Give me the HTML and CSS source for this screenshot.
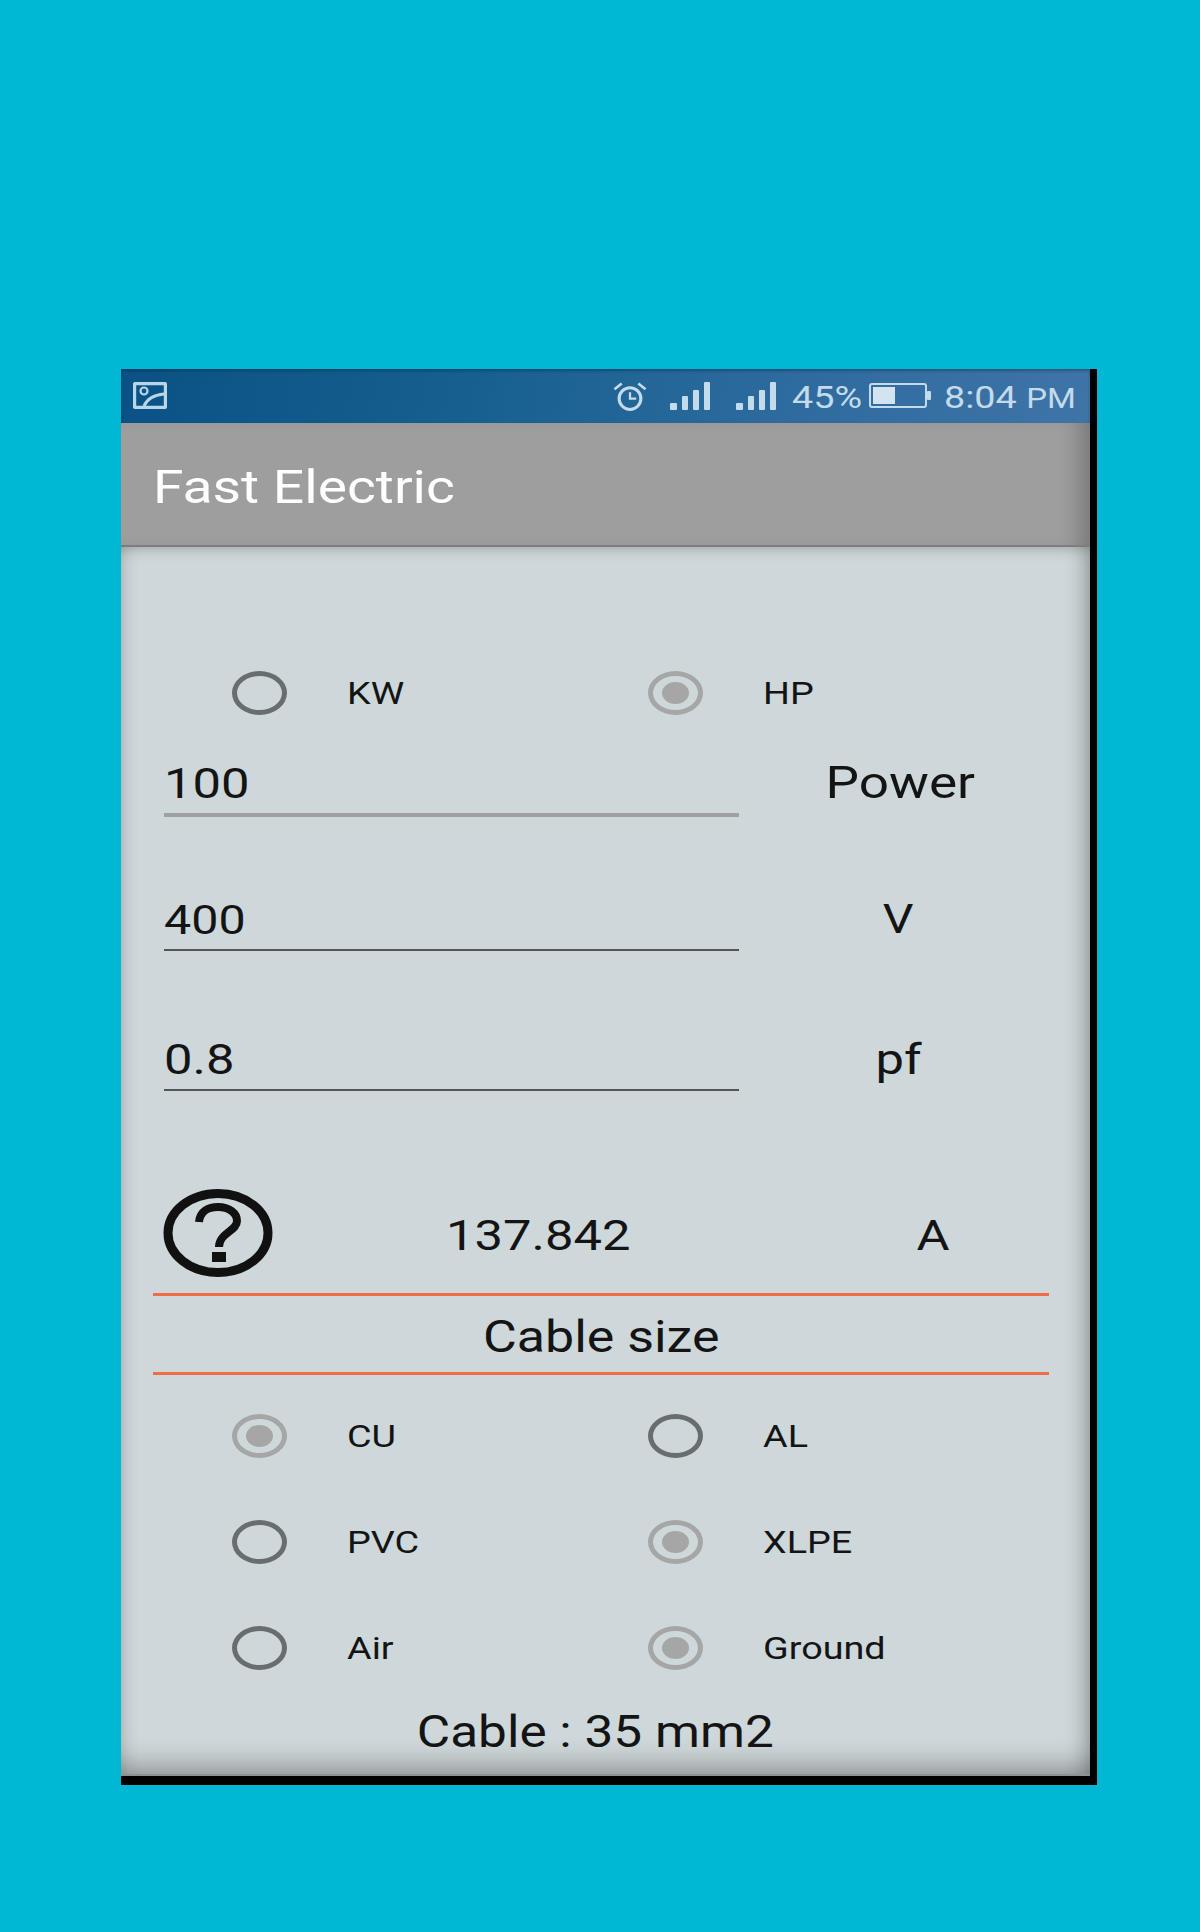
FILE: index.html
```html
<!DOCTYPE html>
<html lang="en">
<head>
<meta charset="utf-8">
<title>Fast Electric</title>
<link rel="stylesheet" href="styles.css">
</head>
<body>
<main class="phone">
  <header class="status">
    <svg class="ic-image" viewBox="0 0 34 27"><rect x="1.5" y="1.5" width="31" height="24" rx="1.5" fill="none" stroke="#b9d6e8" stroke-width="3.4"/><circle cx="11" cy="9" r="3.5" fill="none" stroke="#b9d6e8" stroke-width="2.2"/><path d="M11 24C14 17 21 13 31 12" fill="none" stroke="#b9d6e8" stroke-width="3"/></svg>
    <div class="status-right">
      <svg class="ic-alarm" viewBox="0 0 34 28"><circle cx="17" cy="16" r="10.5" fill="none" stroke="#c3dbeb" stroke-width="3"/><path d="M17 10v6h6" fill="none" stroke="#c3dbeb" stroke-width="2.2"/><path d="M2 7L9 1.5M32 7L25 1.5" stroke="#c3dbeb" stroke-width="2.6" fill="none"/></svg>
      <svg class="ic-signal" viewBox="0 0 40 28"><rect x="0" y="21" width="7" height="7" rx="1" fill="#c3dbeb"/><rect x="12" y="14" width="6" height="14" rx="1" fill="#c3dbeb"/><rect x="23" y="8" width="6" height="20" rx="1" fill="#c3dbeb"/><rect x="34" y="0" width="6" height="28" rx="1" fill="#c3dbeb"/></svg>
      <svg class="ic-signal second" viewBox="0 0 40 28"><rect x="0" y="21" width="7" height="7" rx="1" fill="#c3dbeb"/><rect x="12" y="14" width="6" height="14" rx="1" fill="#c3dbeb"/><rect x="23" y="8" width="6" height="20" rx="1" fill="#c3dbeb"/><rect x="34" y="0" width="6" height="28" rx="1" fill="#c3dbeb"/></svg>
      <span class="status-text pct"><span class="sx">45%</span></span>
      <svg class="ic-battery" viewBox="0 0 62 25"><rect x="1" y="1" width="56" height="23" rx="2" fill="none" stroke="#c3dbeb" stroke-width="2"/><rect x="4" y="4" width="22" height="17" fill="#d3e3ef"/><rect x="58" y="8" width="4" height="9" rx="1" fill="#c3dbeb"/></svg>
      <span class="status-text time"><span class="sx">8:04 <small class="pm">PM</small></span></span>
    </div>
  </header>

  <div class="appbar"><span class="sx title">Fast Electric</span></div>

  <section class="content">
    <div class="radio-row first">
      <div class="radio"><i class="dot"></i><span class="sx">KW</span></div>
      <div class="radio"><i class="dot on"></i><span class="sx">HP</span></div>
    </div>

    <div class="field power">
      <div class="input pale"><span class="sx big">100</span></div>
      <div class="unit"><span class="sxc">Power</span></div>
    </div>
    <div class="field volt">
      <div class="input"><span class="sx">400</span></div>
      <div class="unit"><span class="sxc">V</span></div>
    </div>
    <div class="field pf">
      <div class="input"><span class="sx big">0.8</span></div>
      <div class="unit"><span class="sxc">pf</span></div>
    </div>

    <div class="result">
      <svg class="ic-help" viewBox="0 0 110 88"><ellipse cx="55" cy="44" rx="50" ry="39.5" fill="none" stroke="#111" stroke-width="9"/><path d="M36 33C37 22 46 18 55 18C66 18 74 24 74 32C74 42 56 44 56 58" fill="none" stroke="#111" stroke-width="8"/><rect x="49" y="63" width="14" height="10" fill="#111"/></svg>
      <div class="value"><span class="sx">137.842</span></div>
      <div class="amp"><span class="sxc">A</span></div>
    </div>

    <div class="cable-head"><span class="sxc">Cable size</span></div>

    <div class="radio-row"><div class="radio"><i class="dot on"></i><span class="sx">CU</span></div><div class="radio"><i class="dot"></i><span class="sx">AL</span></div></div>
    <div class="radio-row"><div class="radio"><i class="dot"></i><span class="sx">PVC</span></div><div class="radio"><i class="dot on"></i><span class="sx">XLPE</span></div></div>
    <div class="radio-row"><div class="radio"><i class="dot"></i><span class="sx">Air</span></div><div class="radio"><i class="dot on"></i><span class="sx">Ground</span></div></div>

    <div class="answer"><span class="sxc">Cable : 35 mm2</span></div>
  </section>
</main>
</body>
</html>
```

FILE: styles.css
```css
* { box-sizing: border-box; }

html, body { margin: 0; height: 100%; }

body {
  background: #00b8d4;
  padding: 369px 0 0 121px;
  font-family: Roboto, "Liberation Sans", sans-serif;
  color: #141414;
}

.sx, .sxc {
  display: inline-block;
  transform: scaleX(1.18);
  white-space: nowrap;
}
.sx { transform-origin: left center; }
.sxc { transform-origin: center center; }

.phone {
  width: 976px;
  border-right: 7px solid #000;
  border-bottom: 9px solid #000;
}

.status {
  height: 54px;
  padding: 13px 0 0 12px;
  display: flex;
  align-items: flex-start;
  justify-content: space-between;
  background: linear-gradient(100deg, #0a5285 0%, #15608f 35%, #2f6b9f 70%, #3f74a7 100%);
  box-shadow: inset 0 2px 3px rgba(0, 0, 0, .25);
}
.ic-image { width: 34px; height: 27px; display: block; }
.status-right { display: flex; align-items: flex-start; padding-right: 17px; }
.ic-alarm { width: 36px; height: 29px; display: block; margin-right: 22px; }
.ic-signal { width: 40px; height: 28px; display: block; }
.ic-signal.second { margin-left: 26px; margin-right: 16px; }
.ic-battery { width: 62px; height: 25px; display: block; margin: 1px 13px 0 7px; }
.status-text { font-size: 32px; line-height: 30px; color: #c3dbeb; display: block; }
.pct { width: 70px; }
.time { width: 129px; }
.pm { font-size: 28px; }

.appbar {
  height: 124px;
  background: #9e9e9e;
  border-bottom: 2px solid #7b7d7e;
  padding: 6px 0 0 32px;
  display: flex;
  align-items: center;
  box-shadow: inset -24px 0 22px -14px rgba(0, 0, 0, .24);
}
.title { font-size: 46px; color: #fff; transform: scaleX(1.2); }

.content {
  height: 1229px;
  background: #ced8da;
  box-shadow: inset 0 10px 14px -8px rgba(0, 0, 0, .2), inset -18px 0 20px -12px rgba(0, 0, 0, .26), inset 16px 0 18px -14px rgba(0, 0, 0, .14), inset 0 -26px 26px -16px rgba(0, 0, 0, .28);
  border-bottom: 2px solid #8c9294;
  padding-top: 93px;
}

.radio-row {
  height: 106px;
  padding-left: 111px;
  display: grid;
  grid-template-columns: 416px 1fr;
  align-items: center;
}
.radio-row.first { margin-bottom: -23px; }
.radio { display: flex; align-items: center; gap: 60px; font-size: 32px; }

.dot {
  width: 55px;
  height: 44px;
  border-radius: 50%;
  border: 5.5px solid #686e70;
  flex: none;
  display: flex;
  align-items: center;
  justify-content: center;
}
.dot.on { border-color: #a6a6a6; }
.dot.on::after {
  content: "";
  width: 27px;
  height: 22px;
  border-radius: 50%;
  background: #a6a6a6;
}

.field {
  display: grid;
  grid-template-columns: 575px 1fr;
  padding-left: 43px;
  font-size: 41px;
}
.input {
  height: 70px;
  border-bottom: 2px solid #555;
  display: flex;
  align-items: center;
}
.input.pale { border-bottom: 4px solid #a0a0a0; padding-top: 5px; }
.big { font-size: 43px; }
.unit {
  width: 322px;
  text-align: center;
}
.power { height: 94px; align-items: end; }
.power .unit { align-self: center; padding-top: 25px; font-size: 45px; }
.volt { height: 134px; align-items: end; }
.volt .input { padding-top: 10px; }
.volt .unit { align-self: end; padding: 0 4px 8px 0; }
.pf { height: 140px; align-items: end; }
.pf .input { padding-top: 7px; }
.pf .unit { align-self: end; padding: 0 3px 7px 0; font-size: 43px; }

.result {
  height: 205px;
  margin: 0 41px 0 32px;
  padding: 98px 0 0 10px;
  border-bottom: 3px solid #ef6c44;
  display: flex;
  font-size: 43px;
  align-items: flex-start;
}
.ic-help { width: 110px; height: 88px; display: block; flex: none; }
.value { margin-left: 173px; margin-top: 21px; width: 304px; }
.amp { margin-top: 21px; margin-left: 93px; width: 180px; text-align: center; }

.cable-head {
  height: 79px;
  margin: 0 41px 8px 32px;
  padding: 5px 0 0;
  border-bottom: 3px solid #ef6c44;
  font-size: 44px;
  display: flex;
  align-items: center;
  justify-content: center;
}

.answer {
  font-size: 43.5px;
  text-align: center;
  padding-right: 20px;
  margin-top: 6px;
}
```
